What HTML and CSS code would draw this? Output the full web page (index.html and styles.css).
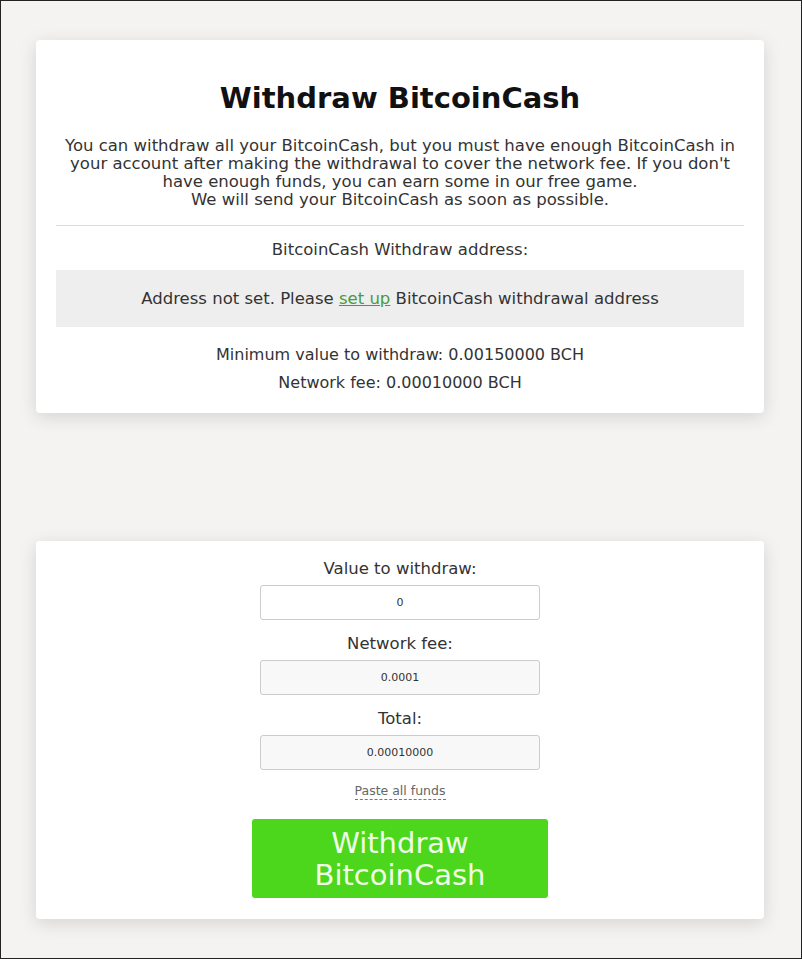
FILE: index.html
```html
<!DOCTYPE html>
<html>
<head>
<meta charset="utf-8">
<link rel="stylesheet" href="styles.css">
</head>
<body>
<div class="frame">
  <section class="card info">
    <h1 class="title">Withdraw BitcoinCash</h1>
    <p class="lead">You can withdraw all your BitcoinCash, but you must have enough BitcoinCash in your account after making the withdrawal to cover the network fee. If you don't have enough funds, you can earn some in our free game.<br>We will send your BitcoinCash as soon as possible.</p>
    <hr class="rule">
    <div class="addr-label">BitcoinCash Withdraw address:</div>
    <div class="addr-box">Address not set. Please <a class="link" href="#">set up</a> BitcoinCash withdrawal address</div>
    <div class="meta">Minimum value to withdraw: 0.00150000 BCH</div>
    <div class="meta">Network fee: 0.00010000 BCH</div>
  </section>

  <section class="card form">
    <label class="field-label">Value to withdraw:</label>
    <input class="field" type="text" value="0">
    <label class="field-label">Network fee:</label>
    <input class="field ro" type="text" value="0.0001" readonly>
    <label class="field-label">Total:</label>
    <input class="field ro" type="text" value="0.00010000" readonly>
    <a class="paste" href="#">Paste all funds</a>
    <button class="submit">Withdraw<br>BitcoinCash</button>
  </section>
</div>
</body>
</html>
```

FILE: styles.css
```css
html, body {
  margin: 0;
  padding: 0;
}
body {
  font-family: "DejaVu Sans", sans-serif;
  color: #333;
}
.frame {
  box-sizing: border-box;
  width: 802px;
  height: 959px;
  border: 1px solid #222;
  background: #f4f3f1;
  padding: 39px 37px 0 35px;
  overflow: hidden;
}
.card {
  background: #fff;
  border-radius: 4px;
  box-shadow: 0 4px 18px rgba(0, 0, 0, 0.13);
  box-sizing: border-box;
  width: 728px;
  text-align: center;
}
.info {
  padding: 38px 20px 20px;
  height: 373px;
}
.title {
  margin: 0;
  font-size: 29px;
  line-height: 40px;
  font-weight: bold;
  color: #111;
}
.lead {
  margin: 19px 0 0;
  font-size: 16.5px;
  line-height: 18px;
}
.rule {
  border: 0;
  border-top: 1px solid #ddd;
  margin: 16px 0 0;
}
.addr-label {
  margin-top: 14px;
  font-size: 16.5px;
  line-height: 20px;
}
.addr-box {
  margin-top: 10px;
  background: #eee;
  height: 57px;
  line-height: 57px;
  font-size: 16.5px;
}
.link {
  color: #4a9b3a;
  text-decoration: underline;
}
.meta {
  font-size: 16px;
  line-height: 28px;
}
.addr-box + .meta {
  margin-top: 14px;
}
.form {
  margin-top: 128px;
  height: 378px;
  padding-top: 18px;
  display: flex;
  flex-direction: column;
  align-items: center;
}
.field-label {
  font-size: 16.5px;
  line-height: 20px;
  margin-bottom: 6px;
}
.field {
  box-sizing: border-box;
  width: 280px;
  height: 35px;
  border: 1px solid #ccc;
  border-radius: 3px;
  background: #fff;
  text-align: center;
  font-family: "DejaVu Sans", sans-serif;
  font-size: 11px;
  color: #333;
  margin-bottom: 14px;
  padding: 0;
}
.field.ro {
  background: #f8f8f8;
}
.paste {
  font-size: 12.5px;
  line-height: 16px;
  color: #666;
  text-decoration: none;
  border-bottom: 1px dashed #777;
  margin-top: -1px;
}
.submit {
  margin-top: 19px;
  width: 296px;
  height: 79px;
  border: 0;
  border-radius: 3px;
  background: #4cd61c;
  color: #efffe6;
  font-family: "DejaVu Sans", sans-serif;
  font-size: 29px;
  line-height: 32px;
  padding: 0;
}
```
